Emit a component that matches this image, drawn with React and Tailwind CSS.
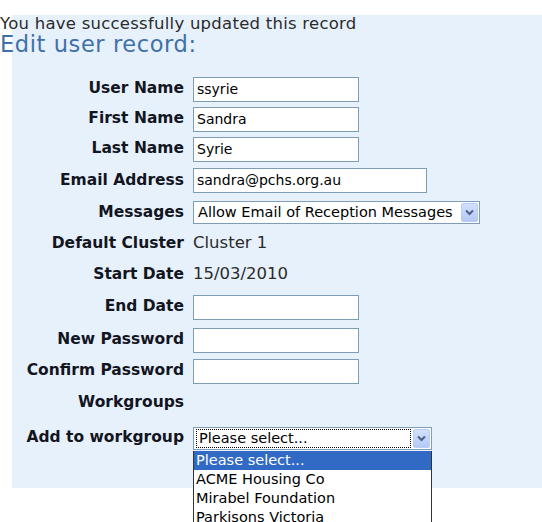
import React from 'react';

function TextBox({ value = '', width = 'w-[166px]' }) {
  return (
    <div className={`${width} h-[25px] border border-[#7f9db9] bg-white flex items-center px-[3px] text-[14px] text-black`}>
      {value}
    </div>
  );
}

function DropArrow() {
  return (
    <div className="w-[17px] h-[19px] mr-[1px] rounded-[2px] border border-[#b8cdf5] bg-gradient-to-b from-[#d2e0fd] to-[#b5c9f6] flex items-center justify-center">
      <svg width="9" height="7" viewBox="0 0 9 7">
        <path d="M1 1.5 L4.5 5 L8 1.5" fill="none" stroke="#4d6185" strokeWidth="2" />
      </svg>
    </div>
  );
}

function Row({ label, height, children }) {
  return (
    <>
      <div className={`${height} flex items-center justify-end font-bold text-[15.5px] text-[#13151f]`}>{label}</div>
      <div className={`${height} flex items-center relative`}>{children}</div>
    </>
  );
}

const groups = ['Please select...', 'ACME Housing Co', 'Mirabel Foundation', 'Parkisons Victoria'];

export default function App() {
  return (
    <div className="w-[542px] h-[522px] overflow-hidden bg-white font-['DejaVu_Sans',sans-serif]">
      <div className="pt-[15px]">
        <div className="ml-[12px] h-[473px] bg-[#e7f1fc]">
          <div className="-ml-[12px]">
            <p className="h-[17px] pt-[1px] leading-[16px] text-[16.5px] tracking-[0.25px] text-[#2b2b2b]">You have successfully updated this record</p>
            <h1 className="h-[22px] mt-[1px] leading-[22px] text-[22.5px] tracking-[0.6px] text-[#3f70a8]">Edit user record:</h1>

            <div className="mt-[19px] grid grid-cols-[184px_auto] gap-x-[9px]">
              <Row label="User Name" height="h-[30px]"><TextBox value="ssyrie" /></Row>
              <Row label="First Name" height="h-[30px]"><TextBox value="Sandra" /></Row>
              <Row label="Last Name" height="h-[30px]"><TextBox value="Syrie" /></Row>
              <Row label="Email Address" height="h-[33px]"><TextBox value="sandra@pchs.org.au" width="w-[234px]" /></Row>
              <Row label="Messages" height="h-[31px]">
                <div className="w-[287px] h-[23px] border border-[#7f9db9] bg-white flex items-center justify-between pl-[4px] text-[14.5px] text-black">
                  <span>Allow Email of Reception Messages</span>
                  <DropArrow />
                </div>
              </Row>
              <Row label="Default Cluster" height="h-[31px]">
                <span className="text-[16.5px] text-[#2b2b2b]">Cluster 1</span>
              </Row>
              <Row label="Start Date" height="h-[31px]">
                <span className="text-[16.5px] text-[#2b2b2b]">15/03/2010</span>
              </Row>
              <Row label="End Date" height="h-[34px]"><TextBox /></Row>
              <Row label="New Password" height="h-[32px]"><TextBox /></Row>
              <Row label="Confirm Password" height="h-[30px]"><TextBox /></Row>
              <Row label="Workgroups" height="h-[33px]" />
              <Row label="Add to workgroup" height="h-[38px]">
                <div className="relative">
                  <div className="w-[239px] h-[23px] border border-[#7f9db9] bg-white flex items-center justify-between pl-[2px] text-[14.5px] text-black">
                    <span className="flex-1 h-[19px] mr-[2px] border border-dotted border-black leading-[17px] px-[2px]">Please select...</span>
                    <DropArrow />
                  </div>
                  <ul className="absolute left-0 top-[24px] w-[239px] border-x border-[#333] bg-white text-[14.5px] text-black">
                    {groups.map((g, i) => (
                      <li
                        key={g}
                        className={i === 0 ? 'h-[19px] leading-[19px] px-[2px] bg-[#316ac5] text-white' : 'h-[19px] leading-[19px] px-[2px]'}
                      >
                        {g}
                      </li>
                    ))}
                  </ul>
                </div>
              </Row>
            </div>
          </div>
        </div>
      </div>
    </div>
  );
}
